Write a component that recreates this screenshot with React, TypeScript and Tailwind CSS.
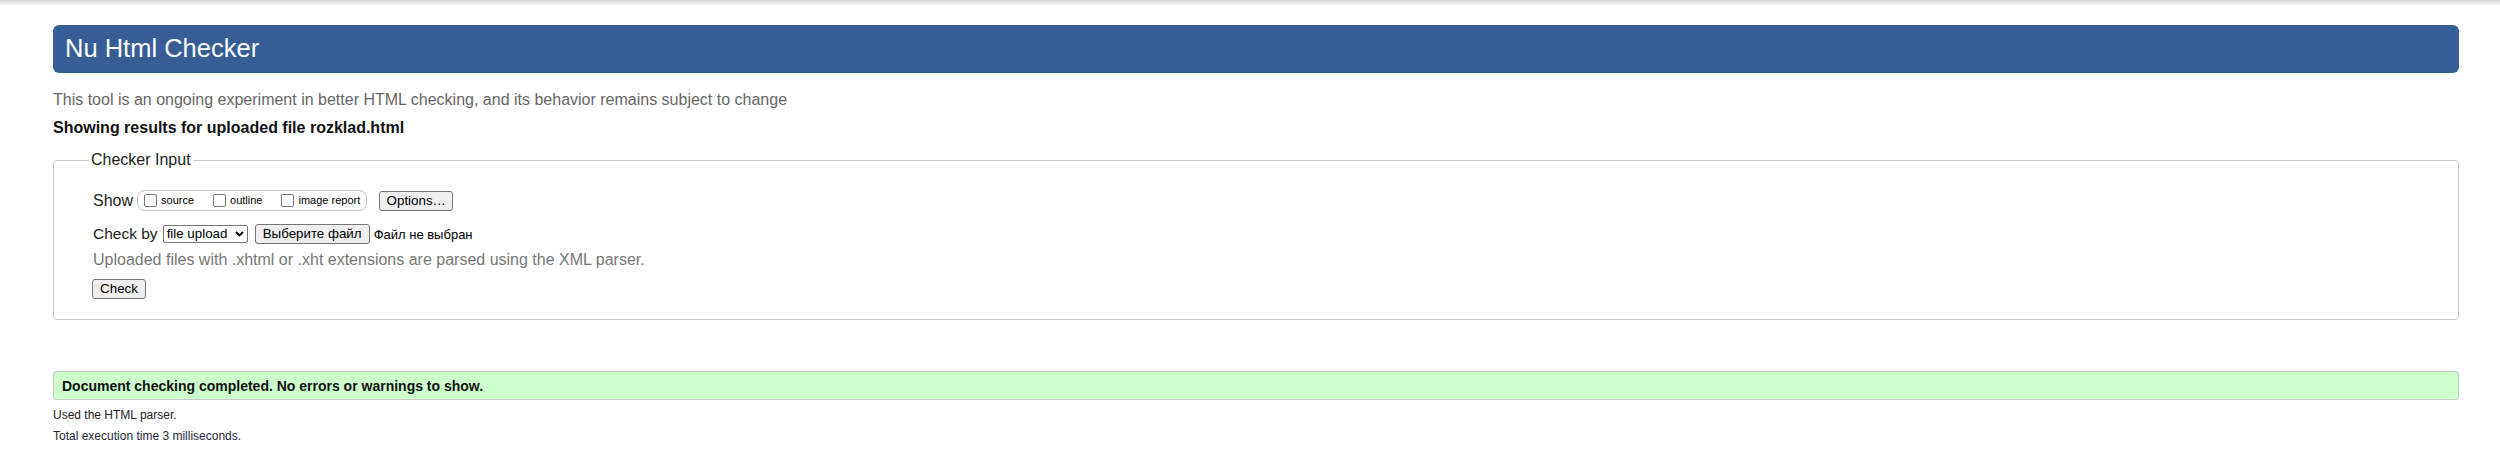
import { ReactNode } from 'react';

const font = { fontFamily: '"Liberation Sans", Arial, sans-serif' };

function NativeButton({ children, className = '' }: { children: ReactNode; className?: string }) {
  return (
    <span
      className={`inline-flex items-center justify-center bg-[#efefef] border border-[#767676] rounded-[3px] text-[13.33px] text-black leading-none ${className}`}
    >
      {children}
    </span>
  );
}

function Checkbox({ label, className = '' }: { label: string; className?: string }) {
  return (
    <span className={`inline-flex items-center gap-[4px] ${className}`}>
      <span className="w-[13px] h-[13px] bg-white border border-[#767676] rounded-[2px]" />
      <span className="text-[11px] leading-none text-black">{label}</span>
    </span>
  );
}

export default function App() {
  return (
    <div className="bg-white min-h-[451px] text-[#222]" style={font}>
      {/* browser top shadow */}
      <div className="h-[6px] bg-gradient-to-b from-[#d2d2d2] to-white" />

      <div className="pl-[53px] pr-[41px]">
        <h1 className="mt-[19px] h-[48px] flex items-center pl-[12px] bg-[#365d95] rounded-[6px] text-white text-[25.5px] leading-none">
          Nu Html Checker
        </h1>

        <p className="mt-[18px] text-[16px] leading-[18px] text-[#666]">
          This tool is an ongoing experiment in better HTML checking, and its behavior remains subject to change
        </p>
        <p className="mt-[10px] text-[16px] leading-[18px] font-bold text-[#111]">
          Showing results for uploaded file rozklad.html
        </p>

        <fieldset className="mt-[14px] border border-[#cccccc] rounded-[4px] pl-[35px] pt-[21px] pb-[20px]">
          <legend className="px-[2px] text-[16px] leading-[18px] text-[#222]">Checker Input</legend>

          <div className="ml-[4px] flex items-center h-[21px] text-[16px]">
            <span>Show</span>
            <span className="ml-[4px] h-[21px] inline-flex items-center border border-[#c4c4c4] rounded-[8px] pl-[6px] pr-[6px]">
              <Checkbox label="source" />
              <Checkbox label="outline" className="ml-[19px]" />
              <Checkbox label="image report" className="ml-[19px]" />
            </span>
            <NativeButton className="ml-[12px] w-[74px] h-[20px]">Options…</NativeButton>
          </div>

          <div className="ml-[4px] mt-[13px] flex items-center h-[20px] text-[16px]">
            <span className="text-[15.5px]">Check by</span>
            <span className="ml-[5px] w-[85px] h-[18px] inline-flex items-center justify-between bg-white border border-[#767676] rounded-[2px] pl-[3px] pr-[3px] text-[13.33px] text-black leading-none">
              file upload
              <svg width="9" height="6" viewBox="0 0 9 6" fill="none" stroke="#000" strokeWidth="1.8">
                <path d="M1 1l3.5 3.5L8 1" />
              </svg>
            </span>
            <NativeButton className="ml-[7px] w-[115px] h-[20px]">Выберите файл</NativeButton>
            <span className="ml-[4px] text-[13px] text-black leading-none">Файл не выбран</span>
          </div>

          <p className="ml-[4px] mt-[7px] text-[16px] leading-[18px] text-[#777]">
            Uploaded files with .xhtml or .xht extensions are parsed using the XML parser.
          </p>

          <div className="ml-[3px] mt-[10px] flex">
            <NativeButton className="w-[54px] h-[20px]">Check</NativeButton>
          </div>
        </fieldset>

        <div className="mt-[51px] h-[29px] flex items-center pl-[8px] bg-[#ccffcc] border border-[#c8c8c8] rounded-[3px]">
          <span className="text-[14px] font-bold text-[#111] leading-none">
            Document checking completed. No errors or warnings to show.
          </span>
        </div>

        <p className="mt-[8px] text-[12px] leading-[14px] text-[#222]">Used the HTML parser.</p>
        <p className="mt-[7px] text-[12px] leading-[14px] text-[#1e2638]">Total execution time 3 milliseconds.</p>
      </div>
    </div>
  );
}
